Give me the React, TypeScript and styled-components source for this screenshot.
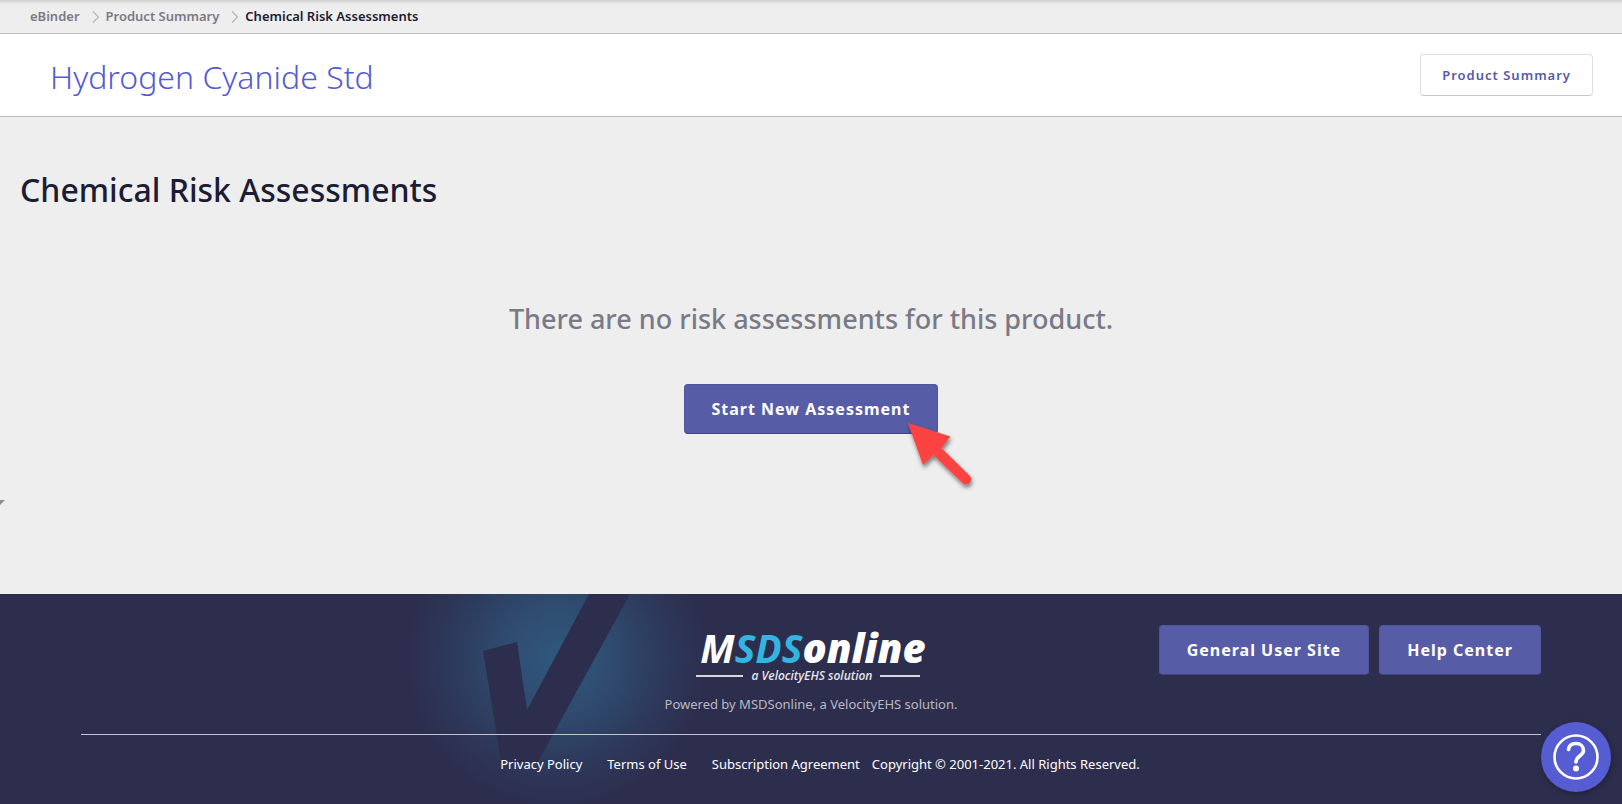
import React from "react";
import styled, { createGlobalStyle } from "styled-components";

const GlobalStyle = createGlobalStyle`
  *, *::before, *::after { box-sizing: border-box; }
  body {
    margin: 0;
    background: #eeeeee;
    color: #1c1c33;
    font-family: "Noto Sans", "Open Sans", sans-serif;
  }
`;

const Page = styled.div`
  display: flex;
  flex-direction: column;
  min-height: 100vh;
`;

const BreadcrumbBar = styled.nav`
  height: 34px;
  padding: 0 30px;
  border-bottom: 1px solid #bdbdca;
  background: linear-gradient(#cfcfcf, #eeeeee 4px);
`;

const BreadcrumbList = styled.ol`
  display: flex;
  align-items: center;
  height: 32px;
  margin: 0;
  padding: 0;
  list-style: none;
  font-size: 13px;
  font-weight: 600;
`;

const Crumb = styled.li`
  display: flex;
  align-items: center;
`;

const CrumbLink = styled.a`
  color: #7a7a87;
  text-decoration: none;
`;

const Chevron = styled.svg`
  width: 8px;
  height: 12px;
  margin: 1px 6px 0 12px;
`;

const ProductHeader = styled.header`
  display: flex;
  align-items: center;
  justify-content: space-between;
  height: 83px;
  padding: 0 29px 0 50px;
  border-bottom: 1px solid #bdbdca;
  background: #ffffff;
`;

const ProductName = styled.h1`
  margin: 3px 0 0;
  color: #555bd0;
  font-size: 32px;
  font-weight: 300;
  line-height: 40px;
`;

const OutlineButton = styled.button`
  height: 42px;
  padding: 0 21px;
  border: 1px solid #dedee8;
  border-bottom-color: #c6c6d8;
  border-radius: 4px;
  background: #ffffff;
  color: #565ba6;
  font: 600 13px/20px "Noto Sans", "Open Sans", sans-serif;
  letter-spacing: 1px;
`;

const Main = styled.main`
  flex: 1;
  padding-top: 49px;
`;

const SectionTitle = styled.h2`
  margin: 0 20px;
  font-size: 32px;
  font-weight: 500;
  line-height: 48px;
`;

const EmptyState = styled.section`
  display: flex;
  flex-direction: column;
  align-items: center;
  gap: 45px;
  padding: 85px 0 66px;
`;

const EmptyMessage = styled.p`
  margin: 0;
  color: #7a7a87;
  font-size: 27px;
  font-weight: 500;
  line-height: 40px;
`;

const ActionWrap = styled.div`
  position: relative;
`;

const PrimaryButton = styled.button`
  height: 50px;
  padding: 0 27px;
  border: 1px solid #50559c;
  border-bottom-color: #41467f;
  border-radius: 4px;
  background: #575ca6;
  color: #ffffff;
  font: 700 16px/24px "Noto Sans", "Open Sans", sans-serif;
  letter-spacing: 1px;
`;

const PointerArrow = styled.svg`
  position: absolute;
  top: 34px;
  right: -46px;
  width: 80px;
  height: 80px;
  pointer-events: none;
`;

const CornerMark = styled.svg`
  display: block;
  width: 5px;
  height: 5px;
`;

const Footer = styled.footer`
  position: relative;
  overflow: hidden;
  padding: 0 5%;
  background: #2d2e4e;
  color: #ffffff;
`;

const FooterArt = styled.svg`
  position: absolute;
  top: 0;
  left: calc(50% - 411px);
  width: 320px;
  height: 210px;
`;

const FooterTop = styled.div`
  position: relative;
  display: grid;
  grid-template-columns: 1fr auto 1fr;
  align-items: start;
  height: 141px;
  border-bottom: 1px solid #c3c4cf;
`;

const Brand = styled.div`
  grid-column: 2;
  display: flex;
  flex-direction: column;
  align-items: center;
  padding-top: 34px;
`;

const Logo = styled.div`
  font-family: "Open Sans", "Noto Sans", sans-serif;
  font-style: italic;
`;

const Wordmark = styled.div`
  padding-left: 4px;
  font-size: 39px;
  font-weight: 700;
  line-height: 40px;
  white-space: nowrap;
`;

const WordmarkAccent = styled.span`
  color: #34b4e0;
`;

const WordmarkHeavy = styled.span`
  font-size: 40px;
  font-weight: 800;
`;

const Tagline = styled.div`
  display: flex;
  align-items: center;
  gap: 8px;
  padding-right: 6px;
  color: #e4e4ea;
  font-size: 12px;
  font-weight: 600;
  line-height: 16px;
  white-space: nowrap;

  &::before,
  &::after {
    content: "";
    flex: 6;
    height: 2px;
    background: #d6d6df;
  }

  &::after {
    flex: 5;
  }
`;

const PoweredBy = styled.p`
  margin: 10px 0 0;
  color: #b9b9c4;
  font-size: 13px;
  line-height: 20px;
`;

const FooterActions = styled.div`
  display: flex;
  justify-content: flex-end;
  gap: 10px;
  padding-top: 31px;
`;

const LegalRow = styled.div`
  position: relative;
  display: flex;
  justify-content: center;
  height: 69px;
  padding: 19px 0 0 18px;
  font-size: 13px;
  line-height: 20px;
`;

const LegalLink = styled.a`
  margin-right: 25px;
  color: #ffffff;
  text-decoration: none;

  &:last-of-type {
    margin-right: 12px;
  }
`;

const HelpButton = styled.button`
  position: fixed;
  right: 11px;
  bottom: 12px;
  width: 70px;
  height: 70px;
  padding: 0;
  border: 0;
  border-radius: 50%;
  background: #565dd2;
  box-shadow: 1px 2px 6px rgba(0, 0, 0, 0.3);
`;

const HelpIcon = styled.svg`
  display: block;
  width: 70px;
  height: 70px;
`;

function Separator() {
  return (
    <Chevron viewBox="0 0 8 12" aria-hidden="true">
      <path d="M1 0.500l5.500 5.500L1 11.500" fill="none" stroke="#b4b4bc" strokeWidth="1.100" />
    </Chevron>
  );
}

export default function App() {
  return (
    <Page>
      <GlobalStyle />
      <BreadcrumbBar aria-label="Breadcrumb">
        <BreadcrumbList>
          <Crumb>
            <CrumbLink href="#ebinder">eBinder</CrumbLink>
            <Separator />
          </Crumb>
          <Crumb>
            <CrumbLink href="#product-summary">Product Summary</CrumbLink>
            <Separator />
          </Crumb>
          <Crumb aria-current="page">Chemical Risk Assessments</Crumb>
        </BreadcrumbList>
      </BreadcrumbBar>

      <ProductHeader>
        <ProductName>Hydrogen Cyanide Std</ProductName>
        <OutlineButton type="button">Product Summary</OutlineButton>
      </ProductHeader>

      <Main>
        <SectionTitle>Chemical Risk Assessments</SectionTitle>
        <EmptyState>
          <EmptyMessage>There are no risk assessments for this product.</EmptyMessage>
          <ActionWrap>
            <PrimaryButton type="button">Start New Assessment</PrimaryButton>
            <PointerArrow viewBox="0 0 80 80" aria-hidden="true">
              <defs>
                <filter id="arrowShadow" x="-20%" y="-20%" width="150%" height="150%">
                  <feDropShadow dx="1" dy="3" stdDeviation="2" floodColor="#000000" floodOpacity="0.5" />
                </filter>
              </defs>
              <path
                d="M4 5L46.500 18.500L37.500 30L65.500 57.500A5 5 0 0 1 58.500 65L29.500 37L19 47Z"
                fill="#fd4343"
                filter="url(#arrowShadow)"
              />
            </PointerArrow>
          </ActionWrap>
        </EmptyState>
        <CornerMark viewBox="0 0 5 5" aria-hidden="true">
          <path d="M0 0H5L0 5Z" fill="#8e8e8e" />
        </CornerMark>
      </Main>

      <Footer>
        <FooterArt viewBox="0 0 320 210" aria-hidden="true">
          <defs>
            <radialGradient id="glow" gradientUnits="userSpaceOnUse" cx="157" cy="64" r="150">
              <stop offset="0" stopColor="#2f587d" />
              <stop offset="0.35" stopColor="#2f4c70" />
              <stop offset="0.75" stopColor="#2d3759" />
              <stop offset="1" stopColor="#2d2e4e" />
            </radialGradient>
          </defs>
          <rect width="320" height="210" fill="url(#glow)" />
          <path d="M83 57L117 48L127 116L189 0H230L138 168H101Z" fill="#2d2e4e" />
        </FooterArt>

        <FooterTop>
          <Brand>
            <Logo>
              <Wordmark>
                M<WordmarkAccent>SDS</WordmarkAccent>
                <WordmarkHeavy>online</WordmarkHeavy>
              </Wordmark>
              <Tagline>a VelocityEHS solution</Tagline>
            </Logo>
            <PoweredBy>Powered by MSDSonline, a VelocityEHS solution.</PoweredBy>
          </Brand>
          <FooterActions>
            <PrimaryButton type="button">General User Site</PrimaryButton>
            <PrimaryButton type="button">Help Center</PrimaryButton>
          </FooterActions>
        </FooterTop>

        <LegalRow>
          <LegalLink href="#privacy">Privacy Policy</LegalLink>
          <LegalLink href="#terms">Terms of Use</LegalLink>
          <LegalLink href="#subscription">Subscription Agreement</LegalLink>
          <span>Copyright © 2001-2021. All Rights Reserved.</span>
        </LegalRow>
      </Footer>

      <HelpButton type="button" aria-label="Help">
        <HelpIcon viewBox="0 0 70 70" aria-hidden="true">
          <circle cx="35" cy="35" r="21.500" fill="none" stroke="#ffffff" strokeWidth="2.600" />
          <path
            d="M27.500 27.500C28 23.500 31 21.500 35 21.500C39.500 21.500 42.500 24.500 42.500 28.500C42.500 34 35 33.500 35 40"
            fill="none"
            stroke="#ffffff"
            strokeWidth="3.600"
            strokeLinecap="round"
          />
          <circle cx="35" cy="46.500" r="3" fill="#ffffff" />
        </HelpIcon>
      </HelpButton>
    </Page>
  );
}
